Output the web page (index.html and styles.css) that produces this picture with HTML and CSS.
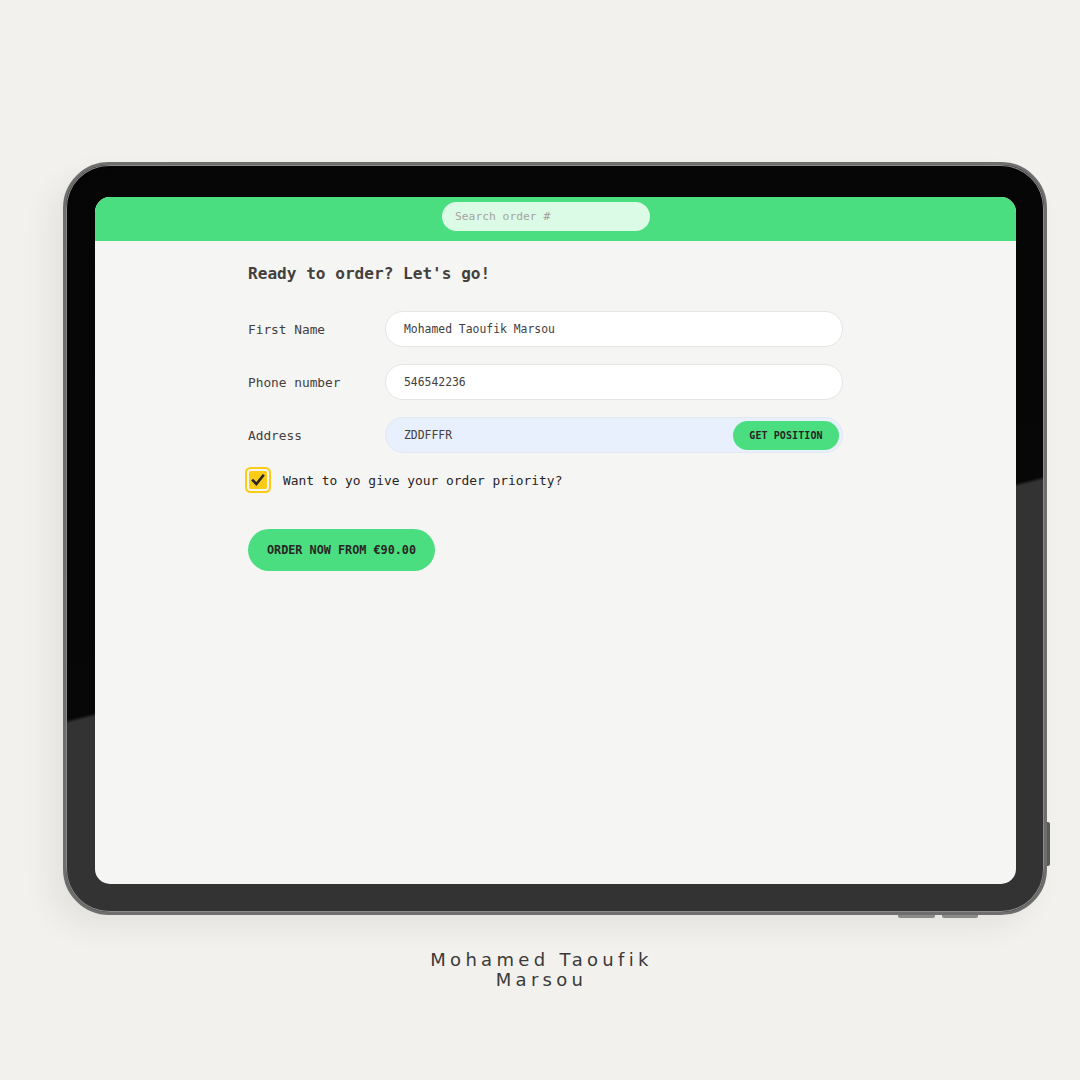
FILE: index.html
```html
<!DOCTYPE html>
<html lang="en">
<head>
<meta charset="utf-8">
<title>Fast React Pizza - Order</title>
<link rel="stylesheet" href="styles.css">
</head>
<body>
<div class="stage">
  <div class="tablet">
    <span class="side-btn"></span>
    <span class="bottom-btn b1"></span>
    <span class="bottom-btn b2"></span>
    <div class="screen">
      <header class="topbar">
        <div class="search">Search order #</div>
      </header>
      <main class="form">
        <h2 class="title">Ready to order? Let's go!</h2>
        <div class="row">
          <label class="label">First Name</label>
          <div class="input">Mohamed Taoufik Marsou</div>
        </div>
        <div class="row">
          <label class="label">Phone number</label>
          <div class="input">546542236</div>
        </div>
        <div class="row">
          <label class="label">Address</label>
          <div class="input autofill">
            <span>ZDDFFFR</span>
            <span class="pos-btn">GET POSITION</span>
          </div>
        </div>
        <div class="check-row">
          <span class="checkbox">
            <svg viewBox="0 0 18 18" width="18" height="18"><path d="M4 9.5 L7.4 13 L14 4.8" fill="none" stroke="#292524" stroke-width="2.6" stroke-linecap="square" stroke-linejoin="miter"/></svg>
          </span>
          <span class="check-label">Want to yo give your order priority?</span>
        </div>
        <div class="submit">ORDER NOW FROM €90.00</div>
      </main>
    </div>
  </div>
  <div class="caption">Mohamed Taoufik<br>Marsou</div>
</div>
</body>
</html>
```

FILE: styles.css
```css
html, body {
  margin: 0;
  padding: 0;
}
body {
  background: #f2f1ed;
  width: 1080px;
  height: 1080px;
  overflow: hidden;
}
.stage {
  display: flex;
  flex-direction: column;
  padding-top: 162px;
  padding-left: 63px;
}
.tablet {
  position: relative;
  width: 984px;
  height: 753px;
  box-sizing: border-box;
  border-radius: 46px;
  border: 3px solid #6e6e6e;
  padding: 32px 28px 28px 29px;
  background: linear-gradient(166deg, #050505 0%, #070707 56%, #333333 56.4%, #333333 100%);
  box-shadow: -14px 14px 30px rgba(0,0,0,0.06), inset 0 0 0 1px #8a8a8a;
}
.side-btn {
  position: absolute;
  right: -6px;
  top: 657px;
  width: 3px;
  height: 44px;
  background: #5a5a5a;
  border-radius: 0 2px 2px 0;
}
.bottom-btn {
  position: absolute;
  bottom: -6px;
  height: 3px;
  background: #8a8a8a;
  border-radius: 0 0 2px 2px;
}
.b1 { left: 832px; width: 37px; }
.b2 { left: 876px; width: 36px; }
.screen {
  height: 100%;
  background: #f5f5f4;
  border-radius: 15px;
  overflow: hidden;
  display: flex;
  flex-direction: column;
}
.topbar {
  height: 44px;
  background: #4ade80;
  display: flex;
  align-items: flex-start;
  padding-top: 5px;
  padding-left: 347px;
  box-sizing: border-box;
  flex-shrink: 0;
}
.search {
  width: 208px;
  height: 29px;
  box-sizing: border-box;
  border-radius: 999px;
  background: #dcfbe6;
  color: #a8a29e;
  font-family: "DejaVu Sans Mono", "Liberation Mono", monospace;
  font-size: 11.3px;
  display: flex;
  align-items: center;
  padding-left: 13px;
}
.form {
  padding: 22px 0 0 153px;
  width: 748px;
  box-sizing: border-box;
  font-family: "DejaVu Sans Mono", "Liberation Mono", monospace;
  color: #44403c;
}
.title {
  margin: 0 0 26px 0;
  font-size: 16.1px;
  font-weight: bold;
  line-height: 22px;
  color: #44403c;
}
.row {
  display: flex;
  align-items: center;
  margin-bottom: 17px;
}
.label {
  width: 137px;
  flex-shrink: 0;
  font-size: 12.8px;
  color: #44403c;
}
.input {
  width: 459px;
  height: 36px;
  box-sizing: border-box;
  border-radius: 999px;
  border: 1px solid #e7e5e4;
  background: #ffffff;
  font-size: 11.4px;
  color: #44403c;
  display: flex;
  align-items: center;
  justify-content: space-between;
  padding-left: 18px;
  padding-right: 3px;
}
.autofill {
  background: #e8f0fe;
  border-color: #e2e8f0;
}
.pos-btn {
  height: 29px;
  width: 106px;
  border-radius: 999px;
  background: #4ade80;
  color: #292524;
  font-size: 10px;
  font-weight: bold;
  display: flex;
  align-items: center;
  justify-content: center;
  letter-spacing: 0.1px;
}
.check-row {
  display: flex;
  align-items: center;
  margin-top: -3px;
  margin-left: 1px;
}
.checkbox {
  width: 18px;
  height: 18px;
  margin: 4px 4px 4px 0;
  border-radius: 2px;
  background: #facc15;
  box-shadow: 0 0 0 2px #f5f5f4, 0 0 0 4px #facc15;
  display: flex;
  align-items: center;
  justify-content: center;
}
.check-label {
  margin-left: 12px;
  font-size: 12.9px;
  color: #292524;
}
.submit {
  margin-top: 36px;
  width: 187px;
  height: 42px;
  border-radius: 999px;
  background: #4ade80;
  color: #292524;
  font-size: 11.8px;
  font-weight: bold;
  display: flex;
  align-items: center;
  justify-content: center;
}
.caption {
  margin-top: 35px;
  width: 957px;
  text-align: center;
  font-family: "DejaVu Sans", "Open Sans", sans-serif;
  font-size: 18px;
  line-height: 20px;
  letter-spacing: 4.3px;
  color: #3a3a3a;
}
```
